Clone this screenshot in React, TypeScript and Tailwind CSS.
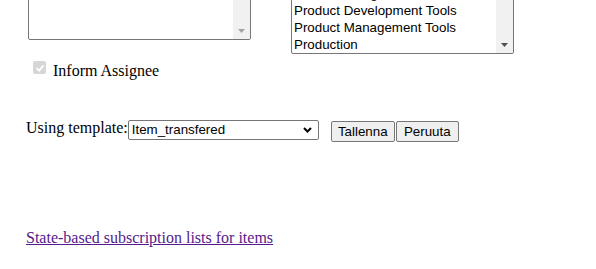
import React from 'react';

const ScrollArrow: React.FC<{ color: string }> = ({ color }) => (
  <svg width="7" height="4" viewBox="0 0 7 4">
    <path d="M0 0 H7 L3.5 4 Z" fill={color} />
  </svg>
);

const App: React.FC = () => {
  const listItems = ['Product Design Tools', 'Product Development Tools', 'Product Management Tools', 'Production'];

  return (
    <div className="w-[596px] h-[269px] overflow-hidden bg-white text-black font-['Liberation_Serif',serif] text-[16px]">
      {/* textarea + listbox, tops scrolled off screen */}
      <div className="flex items-start pl-[28px] -mt-[22px]">
        <div className="w-[223px] h-[62px] border border-[#767676] rounded-[2px] bg-white flex justify-end overflow-hidden">
          <div className="w-[17px] h-full bg-[#f1f1f1] flex flex-col justify-end">
            <div className="h-[17px] flex items-center justify-center">
              <ScrollArrow color="#a3a3a3" />
            </div>
          </div>
        </div>
        <div className="ml-[40px] w-[223px] h-[76px] border border-[#767676] rounded-[2px] bg-white flex overflow-hidden">
          <div className="flex-1 flex flex-col justify-end pl-[2px] font-['Liberation_Sans',Arial,sans-serif] text-[13.33px] leading-[17px]">
            {listItems.map((item) => (
              <div key={item} className="h-[17px] whitespace-nowrap">{item}</div>
            ))}
          </div>
          <div className="w-[17px] h-full bg-[#f1f1f1] flex flex-col justify-end">
            <div className="h-[17px] flex items-center justify-center">
              <ScrollArrow color="#505050" />
            </div>
          </div>
        </div>
      </div>

      <div className="flex items-start mt-[7px] pl-[33px]">
        <span className="w-[13px] h-[13px] rounded-[2px] bg-[#d6d6d6] flex items-center justify-center">
          <svg width="10" height="10" viewBox="0 0 10 10">
            <path d="M1.5 5.2 L4 7.6 L8.6 2.4" stroke="#ffffff" strokeWidth="1.8" fill="none" />
          </svg>
        </span>
        <label className="ml-[7px] mt-[1px] leading-[18px]">Inform Assignee</label>
      </div>

      <div className="flex items-start mt-[39px] pl-[26px] h-[22px]">
        <span className="leading-[18px]">Using template:</span>
        <div className="mt-[1px] w-[191px] h-[20px] border border-[#767676] rounded-[2px] bg-white flex items-center justify-between pl-[3px] pr-[6px] font-['Liberation_Sans',Arial,sans-serif] text-[13.33px]">
          <span>Item_transfered</span>
          <svg width="9" height="6" viewBox="0 0 9 6">
            <path d="M1 1 L4.5 4.5 L8 1" stroke="#000000" strokeWidth="2" fill="none" />
          </svg>
        </div>
        <button className="mt-[2px] ml-[12px] w-[64px] h-[21px] border border-[#767676] rounded-[2px] bg-[#efefef] font-['Liberation_Sans',Arial,sans-serif] text-[13.33px] leading-[17px]">
          Tallenna
        </button>
        <button className="mt-[2px] ml-[1px] w-[63px] h-[21px] border border-[#767676] rounded-[2px] bg-[#efefef] font-['Liberation_Sans',Arial,sans-serif] text-[13.33px] leading-[17px]">
          Peruuta
        </button>
      </div>

      <div className="mt-[88px] pl-[26px] leading-[18px]">
        <a href="#" className="text-[#551a8b] underline">State-based subscription lists for items</a>
      </div>
    </div>
  );
};

export default App;
